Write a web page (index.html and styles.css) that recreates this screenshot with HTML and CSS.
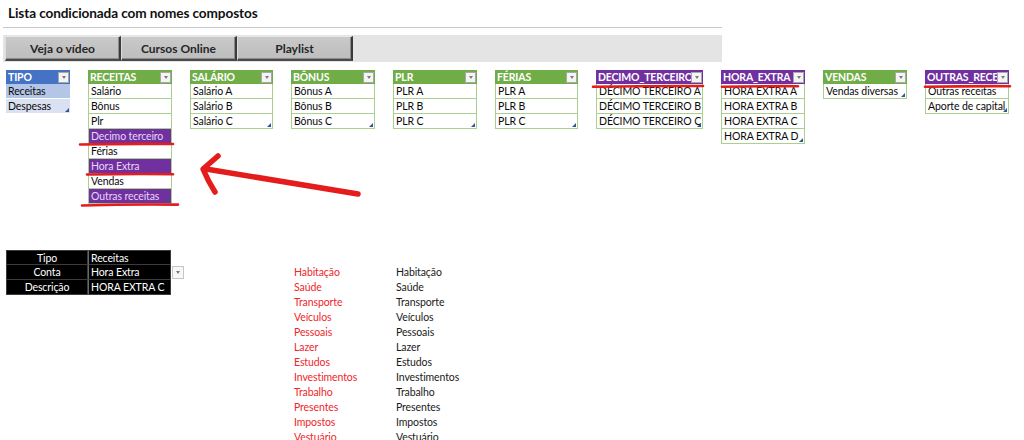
FILE: index.html
```html
<!DOCTYPE html>
<html lang="pt">
<head>
<meta charset="utf-8">
<title>Lista condicionada com nomes compostos</title>
<link rel="stylesheet" href="styles.css">
</head>
<body>
<div class="page">
  <h1 class="title">Lista condicionada com nomes compostos</h1>
  <div class="btnbar">
    <button class="btn">Veja o vídeo</button>
    <button class="btn">Cursos Online</button>
    <button class="btn">Playlist</button>
  </div>

  <div class="tables">
    <div class="tbl tipo">
      <div class="head blue"><span class="lbl">TIPO</span><span class="dd"></span></div>
      <div class="row b1">Receitas</div>
      <div class="row b2 last">Despesas</div>
    </div>

    <div class="tbl w84">
      <div class="head green"><span class="lbl">RECEITAS</span><span class="dd"></span></div>
      <div class="row">Salário</div>
      <div class="row">Bônus</div>
      <div class="row">Plr</div>
      <div class="row hl">Decimo terceiro</div>
      <div class="row">Férias</div>
      <div class="row hl">Hora Extra</div>
      <div class="row">Vendas</div>
      <div class="row hl last">Outras receitas</div>
    </div>

    <div class="tbl w83">
      <div class="head green"><span class="lbl">SALÁRIO</span><span class="dd"></span></div>
      <div class="row">Salário A</div>
      <div class="row">Salário B</div>
      <div class="row last">Salário C</div>
    </div>

    <div class="tbl w84">
      <div class="head green"><span class="lbl">BÔNUS</span><span class="dd"></span></div>
      <div class="row">Bônus A</div>
      <div class="row">Bônus B</div>
      <div class="row last">Bônus C</div>
    </div>

    <div class="tbl w84">
      <div class="head green"><span class="lbl">PLR</span><span class="dd"></span></div>
      <div class="row">PLR A</div>
      <div class="row">PLR B</div>
      <div class="row last">PLR C</div>
    </div>

    <div class="tbl w83">
      <div class="head green"><span class="lbl">FÉRIAS</span><span class="dd"></span></div>
      <div class="row">PLR A</div>
      <div class="row">PLR B</div>
      <div class="row last">PLR C</div>
    </div>

    <div class="tbl w107">
      <div class="head purple"><span class="lbl">DECIMO_TERCEIRO</span><span class="dd"></span></div>
      <div class="row">DÉCIMO TERCEIRO A</div>
      <div class="row">DÉCIMO TERCEIRO B</div>
      <div class="row last">DÉCIMO TERCEIRO C</div>
    </div>

    <div class="tbl w84">
      <div class="head purple"><span class="lbl">HORA_EXTRA</span><span class="dd"></span></div>
      <div class="row">HORA EXTRA A</div>
      <div class="row">HORA EXTRA B</div>
      <div class="row">HORA EXTRA C</div>
      <div class="row last">HORA EXTRA D</div>
    </div>

    <div class="tbl w84">
      <div class="head green"><span class="lbl">VENDAS</span><span class="dd"></span></div>
      <div class="row last">Vendas diversas</div>
    </div>

    <div class="tbl w84">
      <div class="head purple"><span class="lbl">OUTRAS_RECEITAS</span><span class="dd"></span></div>
      <div class="row">Outras receitas</div>
      <div class="row last">Aporte de capital</div>
    </div>
  </div>

  <div class="lower">
    <div class="form">
      <div class="fl">Tipo</div><div class="fv">Receitas</div><div class="fx"></div>
      <div class="fl">Conta</div><div class="fv">Hora Extra</div><div class="fx"><span class="dd"></span></div>
      <div class="fl">Descrição</div><div class="fv">HORA EXTRA C</div><div class="fx"></div>
    </div>
    <ul class="list red">
      <li>Habitação</li><li>Saúde</li><li>Transporte</li><li>Veículos</li><li>Pessoais</li><li>Lazer</li>
      <li>Estudos</li><li>Investimentos</li><li>Trabalho</li><li>Presentes</li><li>Impostos</li><li>Vestuário</li>
    </ul>
    <ul class="list dark">
      <li>Habitação</li><li>Saúde</li><li>Transporte</li><li>Veículos</li><li>Pessoais</li><li>Lazer</li>
      <li>Estudos</li><li>Investimentos</li><li>Trabalho</li><li>Presentes</li><li>Impostos</li><li>Vestuário</li>
    </ul>
  </div>

  <svg class="marks" width="1024" height="440" viewBox="0 0 1024 440" aria-hidden="true">
    <g fill="none" stroke="#e51c1c" stroke-linecap="round" stroke-linejoin="round">
      <path d="M80 144.5 Q126 143.5 173 144" stroke-width="2.6"/>
      <path d="M87 174.5 Q130 173.8 173 174.2" stroke-width="2.6"/>
      <path d="M82 205.5 Q130 204 178 204.6" stroke-width="2.6"/>
      <path d="M593 86.8 Q650 85.8 703 86" stroke-width="2.6"/>
      <path d="M722 86.8 Q760 86 798 86.2" stroke-width="2.6"/>
      <path d="M925 86.8 Q968 86 1010 86.2" stroke-width="2.6"/>
      <path d="M358 194 L206 169" stroke-width="5.5"/>
      <path d="M218 156 L203 169 Q208 181 215 192" stroke-width="5.5"/>
    </g>
  </svg>
</div>
</body>
</html>
```

FILE: styles.css
```css
html, body {
  margin: 0;
  padding: 0;
  overflow: hidden;
  background: #ffffff;
}

.page {
  position: relative;
  width: 1024px;
  height: 440px;
  font-family: Lato, "Open Sans", "Liberation Sans", sans-serif;
  font-size: 10.5px;
  letter-spacing: -0.1px;
  color: #000;
}

.title {
  margin: 0 302px 0 3px;
  padding: 5px 0 0 5px;
  height: 22px;
  font-size: 13.6px;
  line-height: 16px;
  font-weight: 700;
  letter-spacing: -0.1px;
  color: #111;
  border-bottom: 1px solid #c9c9c9;
}

.btnbar {
  margin: 7px 302px 0 3px;
  height: 27px;
  background: #e4e4e4;
  display: flex;
  align-items: stretch;
  padding: 1px 0 1px 2px;
  box-sizing: border-box;
}

.btn {
  width: 116px;
  margin: 0;
  padding: 0;
  font-family: Lato, "Open Sans", "Liberation Sans", sans-serif;
  font-size: 12px;
  font-weight: 700;
  color: #262626;
  background: linear-gradient(#c9c9c9, #bdbdbd);
  border-style: solid;
  border-width: 1px 2px 2px 1px;
  border-color: #e9e9e9 #3a3a3a #4a4a4a #dcdcdc;
  box-shadow: inset -1px -1px 0 #8c8c8c;
}

.tables {
  margin: 8px 0 0 6px;
  display: flex;
  align-items: flex-start;
  gap: 18px;
}

.tbl {
  position: relative;
  flex: none;
}
.tipo { width: 64px; }
.w84 { width: 84px; }
.w83 { width: 83px; }
.w107 { width: 107px; }

.head {
  height: 14px;
  display: flex;
  align-items: center;
  color: #fff;
  font-weight: 700;
  font-size: 10.5px;
  letter-spacing: -0.15px;
  padding: 0 1px 0 2px;
  box-sizing: border-box;
}
.head .lbl {
  flex: 1;
  overflow: hidden;
  white-space: nowrap;
  line-height: 14px;
}
.blue { background: #4472c4; }
.green { background: #70ad47; }
.purple { background: #7030a0; }

.dd {
  flex: none;
  width: 11px;
  height: 11px;
  box-sizing: border-box;
  background: #f4f4f4;
  border: 1px solid #a8a8a8;
  display: flex;
  align-items: center;
  justify-content: center;
}
.dd::after {
  content: "";
  border-left: 2.5px solid transparent;
  border-right: 2.5px solid transparent;
  border-top: 3px solid #7a7a7a;
}

.row {
  height: 15px;
  line-height: 15px;
  padding-left: 2px;
  box-sizing: border-box;
  border: 1px solid #a9d08e;
  border-top: none;
  white-space: nowrap;
  overflow: hidden;
  color: #0a0a0a;
}
.row.hl {
  background: #7030a0;
  color: #e6d6f6;
  border-color: #a9d08e;
}
.tipo .row {
  border: none;
  border-bottom: 1px solid #ffffff;
}
.row.b1 { background: #b4c6e7; }
.row.b2 { background: #d9e1f2; }

.row.last { position: relative; }
.row.last::after {
  content: "";
  position: absolute;
  right: 1px;
  bottom: 1px;
  border-left: 4px solid transparent;
  border-bottom: 4px solid #2f5597;
}

.lower {
  margin: 46px 0 0 6px;
  display: flex;
  align-items: flex-start;
}

.form {
  display: grid;
  grid-template-columns: 82px 83px 13px;
  grid-auto-rows: 15px;
  width: 178px;
}
.fl, .fv {
  background: #000;
  color: #fff;
  line-height: 14px;
  border: 1px solid #3c3c3c;
  border-top: none;
  box-sizing: border-box;
  white-space: nowrap;
}
.form .fl:first-child, .form .fv:nth-child(2) {
  border-top: 1px solid #3c3c3c;
}
.fl { text-align: center; }
.fv { padding-left: 2px; border-left: 1px solid #6a6a6a; }
.fx {
  display: flex;
  align-items: center;
  padding-left: 1px;
}
.fx .dd {
  width: 12px;
  height: 13px;
  background: #f7f7f7;
  border-color: #c6c6c6;
}

.list {
  list-style: none;
  margin: 15px 0 0 0;
  padding: 0;
}
.list li {
  height: 15px;
  line-height: 15px;
  white-space: nowrap;
}
.list.red {
  margin-left: 110px;
  width: 102px;
  color: #f0262a;
}
.list.dark {
  color: #1a1a1a;
}

.marks {
  position: absolute;
  left: 0;
  top: 0;
  pointer-events: none;
}
```
